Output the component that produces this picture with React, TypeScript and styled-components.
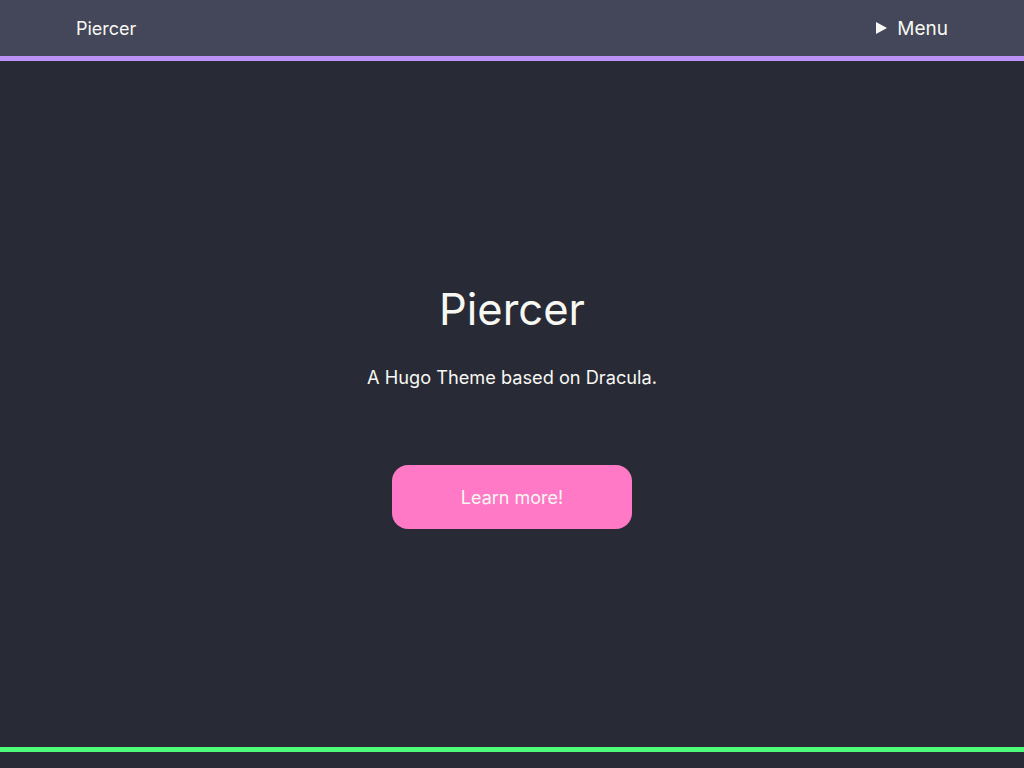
import React from "react";
import styled, { createGlobalStyle } from "styled-components";

const Global = createGlobalStyle`
  html, body { margin: 0; padding: 0; height: 100%; }
  body {
    background: #282a36;
    color: #f8f8f2;
    font-family: Inter, "Liberation Sans", sans-serif;
  }
  #root { min-height: 100vh; display: flex; flex-direction: column; }
`;

const Header = styled.header`
  height: 56px;
  background: #44475a;
  border-bottom: 5px solid #bd93f9;
  display: flex;
  align-items: center;
  justify-content: space-between;
  padding: 0 76px;
  flex-shrink: 0;
`;

const Brand = styled.a`
  color: #f8f8f2;
  font-size: 18px;
  text-decoration: none;
`;

const MenuToggle = styled.div`
  display: flex;
  align-items: center;
  gap: 10px;
  font-size: 19px;
  color: #f8f8f2;
`;

const Triangle = styled.span`
  width: 0;
  height: 0;
  border-top: 6px solid transparent;
  border-bottom: 6px solid transparent;
  border-left: 11px solid #f8f8f2;
`;

const Main = styled.main`
  flex: 1;
  display: flex;
  flex-direction: column;
  align-items: center;
  justify-content: center;
  padding-top: 4px;
`;

const Title = styled.h1`
  margin: 0;
  font-size: 43.5px;
  font-weight: 400;
  line-height: 52px;
`;

const Subtitle = styled.p`
  margin: 30px 0 0;
  font-size: 18.2px;
  line-height: 24px;
`;

const Button = styled.a`
  margin-top: 76px;
  width: 240px;
  height: 64px;
  border-radius: 16px;
  background: #ff79c6;
  color: #f8f8f2;
  font-size: 18px;
  display: flex;
  align-items: center;
  justify-content: center;
  text-decoration: none;
`;

const Footer = styled.footer`
  height: 16px;
  border-top: 5px solid #50fa7b;
  flex-shrink: 0;
`;

export default function App() {
  return (
    <>
      <Global />
      <Header>
        <Brand href="#">Piercer</Brand>
        <MenuToggle>
          <Triangle />
          Menu
        </MenuToggle>
      </Header>
      <Main>
        <Title>Piercer</Title>
        <Subtitle>A Hugo Theme based on Dracula.</Subtitle>
        <Button href="#">Learn more!</Button>
      </Main>
      <Footer />
    </>
  );
}
